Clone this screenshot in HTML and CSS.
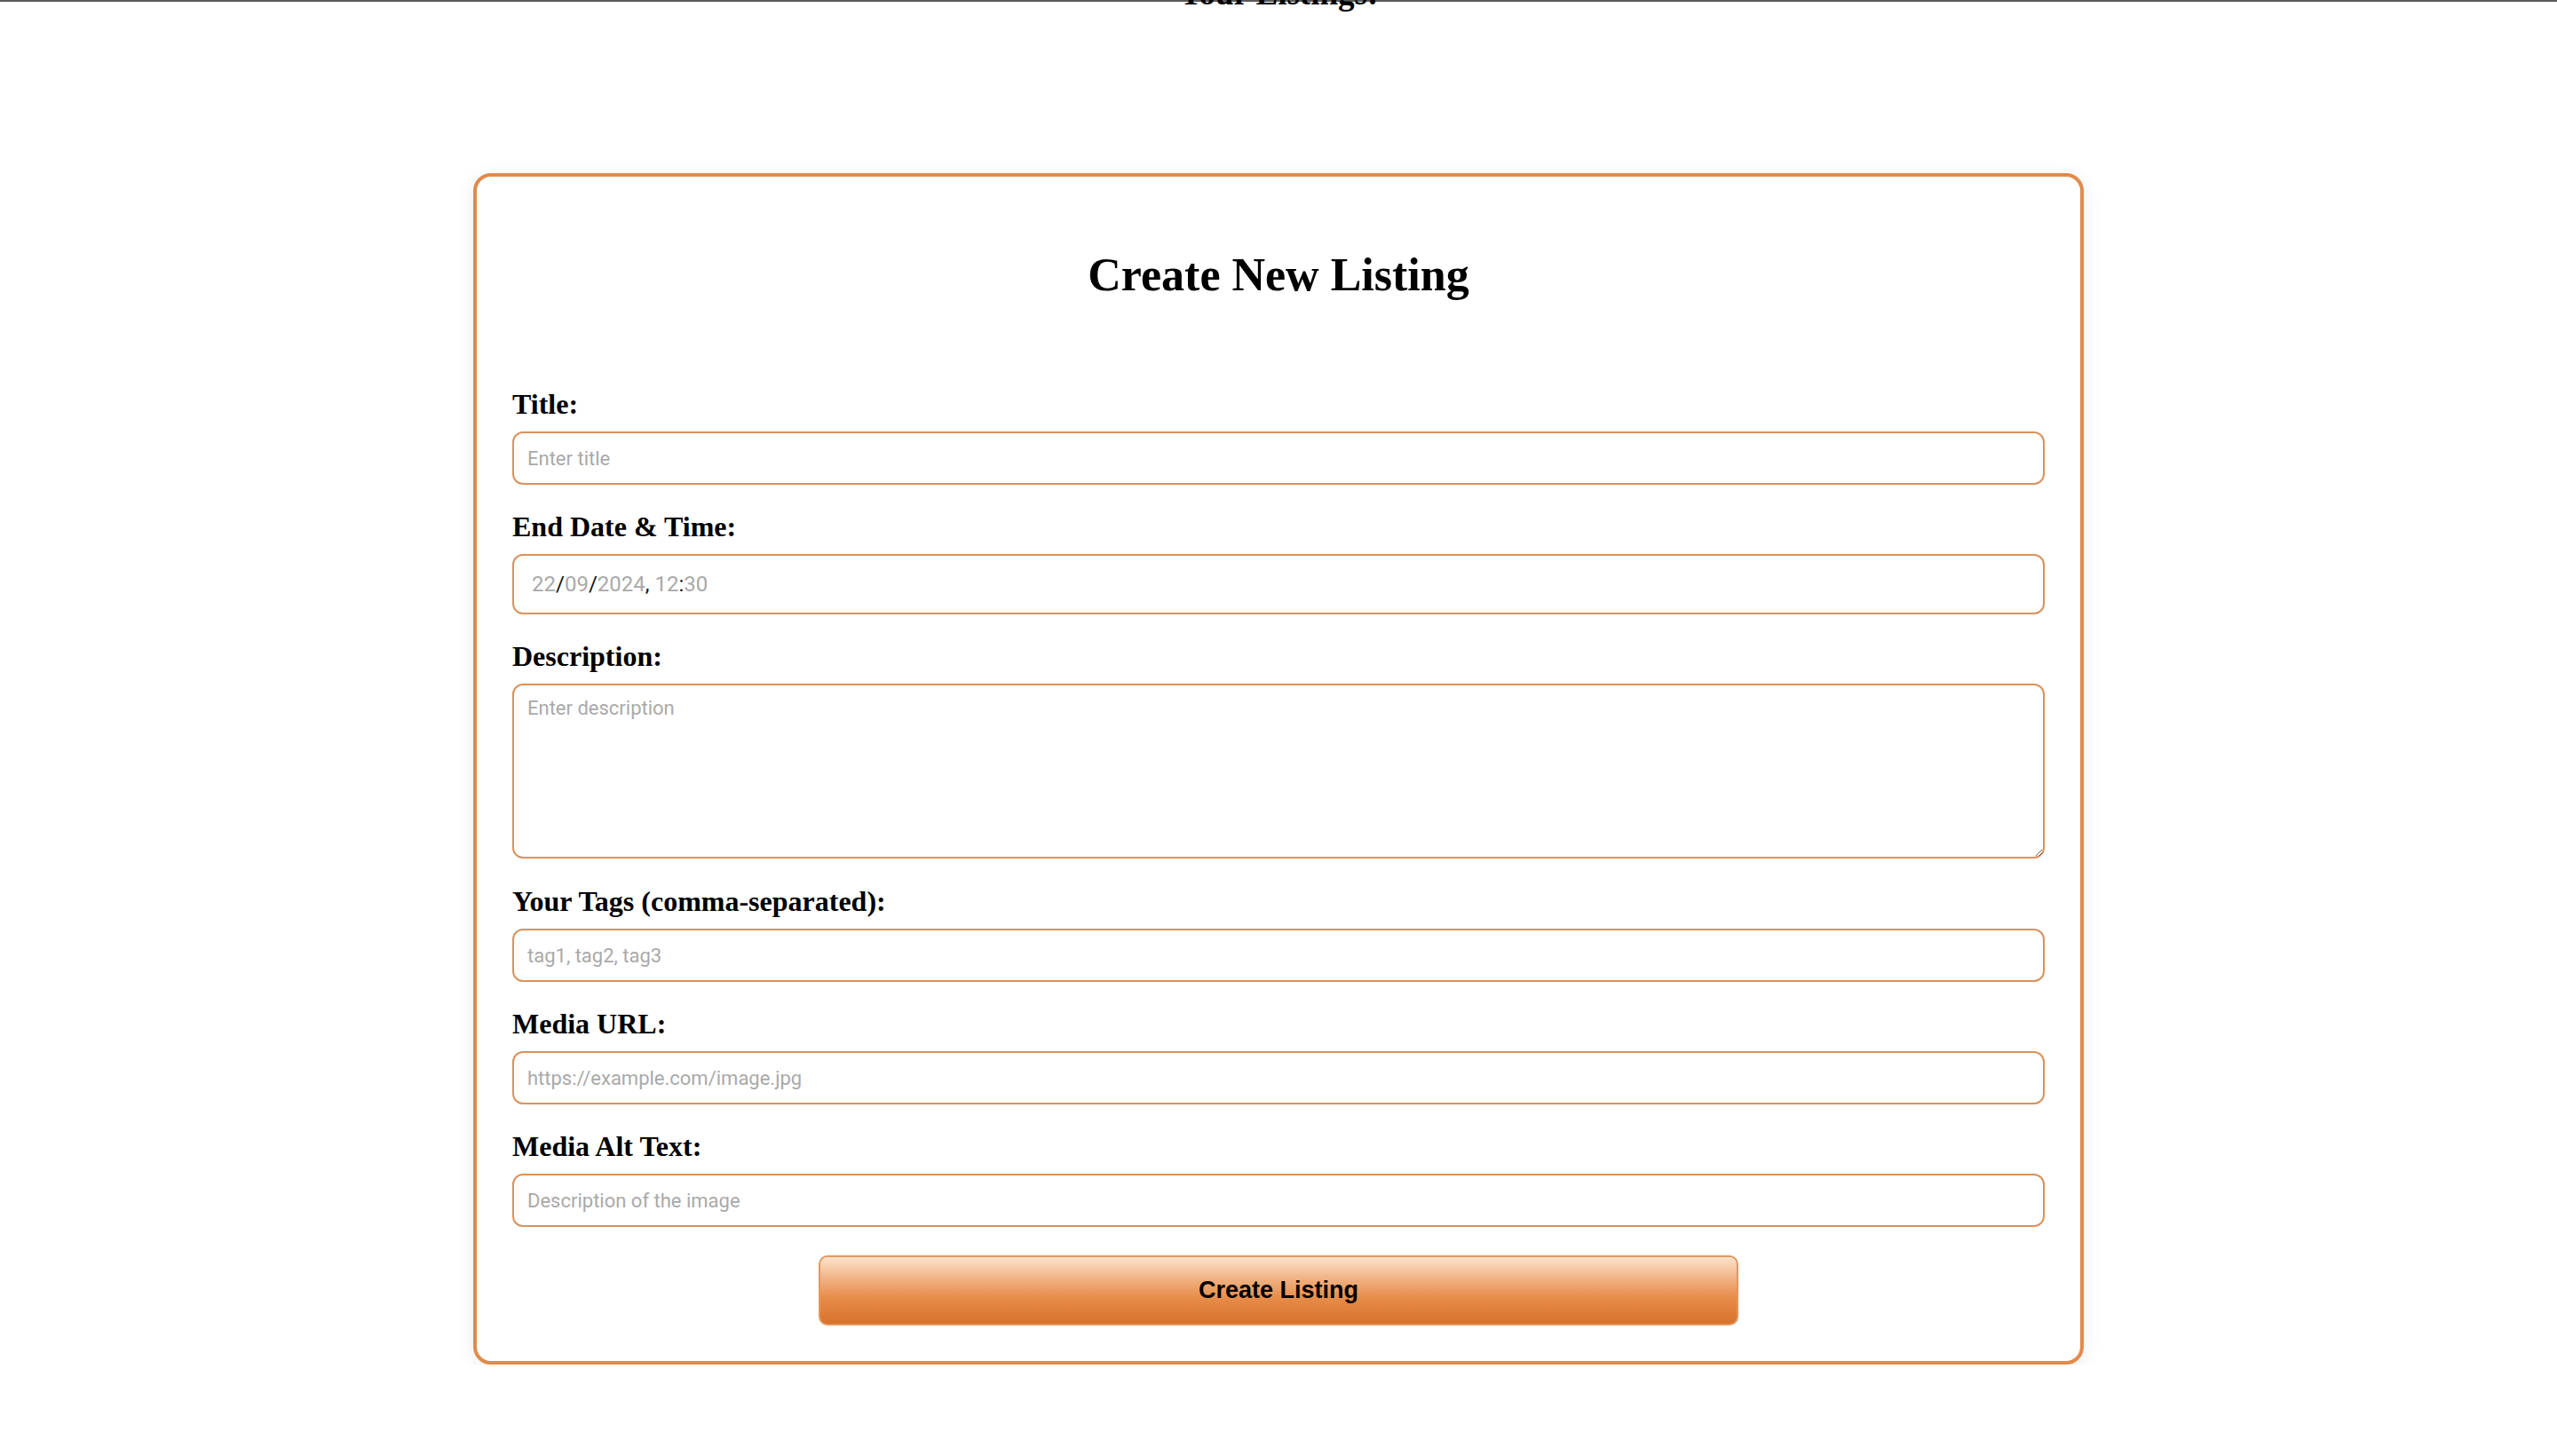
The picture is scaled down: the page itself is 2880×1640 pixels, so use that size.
FILE: index.html
```html
<!DOCTYPE html>
<html lang="en">
<head>
<meta charset="utf-8">
<title>Create New Listing</title>
<link rel="stylesheet" href="styles.css">
</head>
<body>
<div class="top-rule"></div>
<h2 class="listings-title">Your Listings:</h2>

<main class="card">
  <h1 class="card-title">Create New Listing</h1>
  <form class="listing-form">
    <label class="field-label" for="title">Title:</label>
    <input class="field-input" id="title" type="text" placeholder="Enter title">

    <label class="field-label" for="end">End Date &amp; Time:</label>
    <div class="field-input date-field" id="end">
      <span class="dt-val">22</span><span class="dt-sep">/</span><span class="dt-val">09</span><span class="dt-sep">/</span><span class="dt-val">2024</span><span class="dt-sep">,</span><span class="dt-gap"></span><span class="dt-val">12</span><span class="dt-sep">:</span><span class="dt-val">30</span>
    </div>

    <label class="field-label" for="desc">Description:</label>
    <textarea class="field-input field-area" id="desc" placeholder="Enter description"></textarea>

    <label class="field-label" for="tags">Your Tags (comma-separated):</label>
    <input class="field-input" id="tags" type="text" placeholder="tag1, tag2, tag3">

    <label class="field-label" for="media">Media URL:</label>
    <input class="field-input" id="media" type="text" placeholder="https://example.com/image.jpg">

    <label class="field-label" for="alt">Media Alt Text:</label>
    <input class="field-input" id="alt" type="text" placeholder="Description of the image">

    <button class="submit-btn" type="button">Create Listing</button>
  </form>
</main>
</body>
</html>
```
FILE: styles.css
```css
html, body {
  margin: 0;
  padding: 0;
  background: #ffffff;
}

body {
  font-family: "Liberation Serif", "Times New Roman", serif;
  color: #000;
}

.top-rule {
  height: 2px;
  background: #5a5a5a;
}

.listings-title {
  margin: -30px 0 0;
  font-size: 37px;
  line-height: 42px;
  font-weight: bold;
  text-align: center;
}

.card {
  box-sizing: border-box;
  width: 1814px;
  margin: 181px auto 0;
  padding: 40px;
  border: 4px solid #e08b4c;
  border-radius: 20px;
  background: #fff;
  box-shadow: 0 4px 22px rgba(0, 0, 0, 0.08);
}

.card-title {
  margin: 41px 0 97px;
  font-size: 52px;
  line-height: 60px;
  font-weight: bold;
  text-align: center;
}

.listing-form {
  display: flex;
  flex-direction: column;
}

.field-label {
  display: block;
  font-size: 32px;
  line-height: 37px;
  font-weight: bold;
  margin: 0 0 12px;
}

.field-input {
  box-sizing: border-box;
  display: block;
  width: 100%;
  height: 60px;
  margin: 0 0 29px;
  padding: 0 15px;
  border: 2px solid #d8925d;
  border-radius: 12px;
  background: #fff;
  font-family: Roboto, "Liberation Sans", sans-serif;
  font-size: 22px;
  color: #000;
  outline: none;
}

.field-input::placeholder {
  color: #a9a9a9;
}

.date-field {
  height: 68px;
  display: flex;
  align-items: center;
  padding: 0 20px;
  font-size: 24px;
}

.dt-val {
  color: #a9a9a9;
}

.dt-sep {
  color: #111;
}

.dt-gap {
  width: 6px;
}

.field-area {
  height: 197px;
  padding: 13px 15px;
  margin-bottom: 30px;
  resize: both;
  line-height: 26px;
}

.submit-btn {
  box-sizing: border-box;
  display: block;
  width: 1036px;
  height: 79px;
  margin: 3px auto 0;
  border: 2px solid #e4965e;
  border-radius: 10px;
  background: linear-gradient(to bottom, #fde3cc 0%, #f2b589 30%, #e68c48 62%, #d8722b 100%);
  font-family: "Liberation Sans", Arial, sans-serif;
  font-size: 27px;
  font-weight: bold;
  color: #000;
  cursor: pointer;
}
```
